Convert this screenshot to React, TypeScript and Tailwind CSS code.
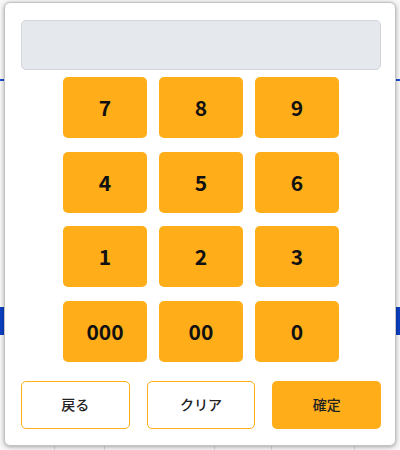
import React from "react";

const keys = ["7", "8", "9", "4", "5", "6", "1", "2", "3", "000", "00", "0"];

export default function App() {
  return (
    <div
      className="relative w-[400px] h-[450px] bg-white overflow-hidden"
      style={{ fontFamily: '"Noto Sans CJK JP", "Noto Sans", sans-serif' }}
    >
      {/* background page behind the dialog */}
      <div className="absolute left-0 top-0 w-[400px] h-[450px] bg-[#f7f7f7]" />
      <div className="absolute left-0 top-[79px] w-[400px] h-[2px] bg-[#1d4fd1]" />
      <div className="absolute left-0 top-[307px] w-[400px] h-[28px] bg-[#0b40c2]" />
      <div className="absolute left-0 top-[440px] w-[400px] h-[10px] flex">
        <div className="w-[55px] border-r border-[#d8d8d8]" />
        <div className="w-[50px] border-r border-[#d8d8d8]" />
        <div className="w-[110px] border-r border-[#d8d8d8]" />
        <div className="w-[57px] border-r border-[#d8d8d8]" />
        <div className="w-[83px] border-r border-[#d8d8d8]" />
      </div>

      {/* dialog */}
      <div className="absolute left-[4px] top-[2px] w-[392px] h-[444px] bg-white border border-[#c4c4c4] rounded-[6px] shadow-[0_1px_4px_rgba(0,0,0,0.35)] flex flex-col items-center pt-[17px] pl-[2px]">
        <div className="w-[360px] h-[50px] bg-[#e5e8ec] border border-[#d2d6db] rounded-[5px]" />
        <div className="mt-[7px] grid grid-cols-[84px_84px_84px] gap-x-[12px] gap-y-[13.5px]">
          {keys.map((k) => (
            <button
              key={k}
              className="h-[61px] rounded-[5px] bg-[#ffae19] text-[#111] text-[21px] font-bold flex items-center justify-center leading-none"
            >
              {k}
            </button>
          ))}
        </div>
        <div className="mt-[19px] w-[360px] grid grid-cols-3 gap-x-[17px]">
          <button className="h-[48px] rounded-[5px] border border-[#ffae19] bg-white text-[14px] font-medium text-[#222] flex items-center justify-center">
            戻る
          </button>
          <button className="h-[48px] rounded-[5px] border border-[#ffae19] bg-white text-[14px] font-medium text-[#222] flex items-center justify-center">
            クリア
          </button>
          <button className="h-[48px] rounded-[5px] bg-[#ffae19] text-[14px] font-medium text-[#222] flex items-center justify-center">
            確定
          </button>
        </div>
      </div>
    </div>
  );
}
